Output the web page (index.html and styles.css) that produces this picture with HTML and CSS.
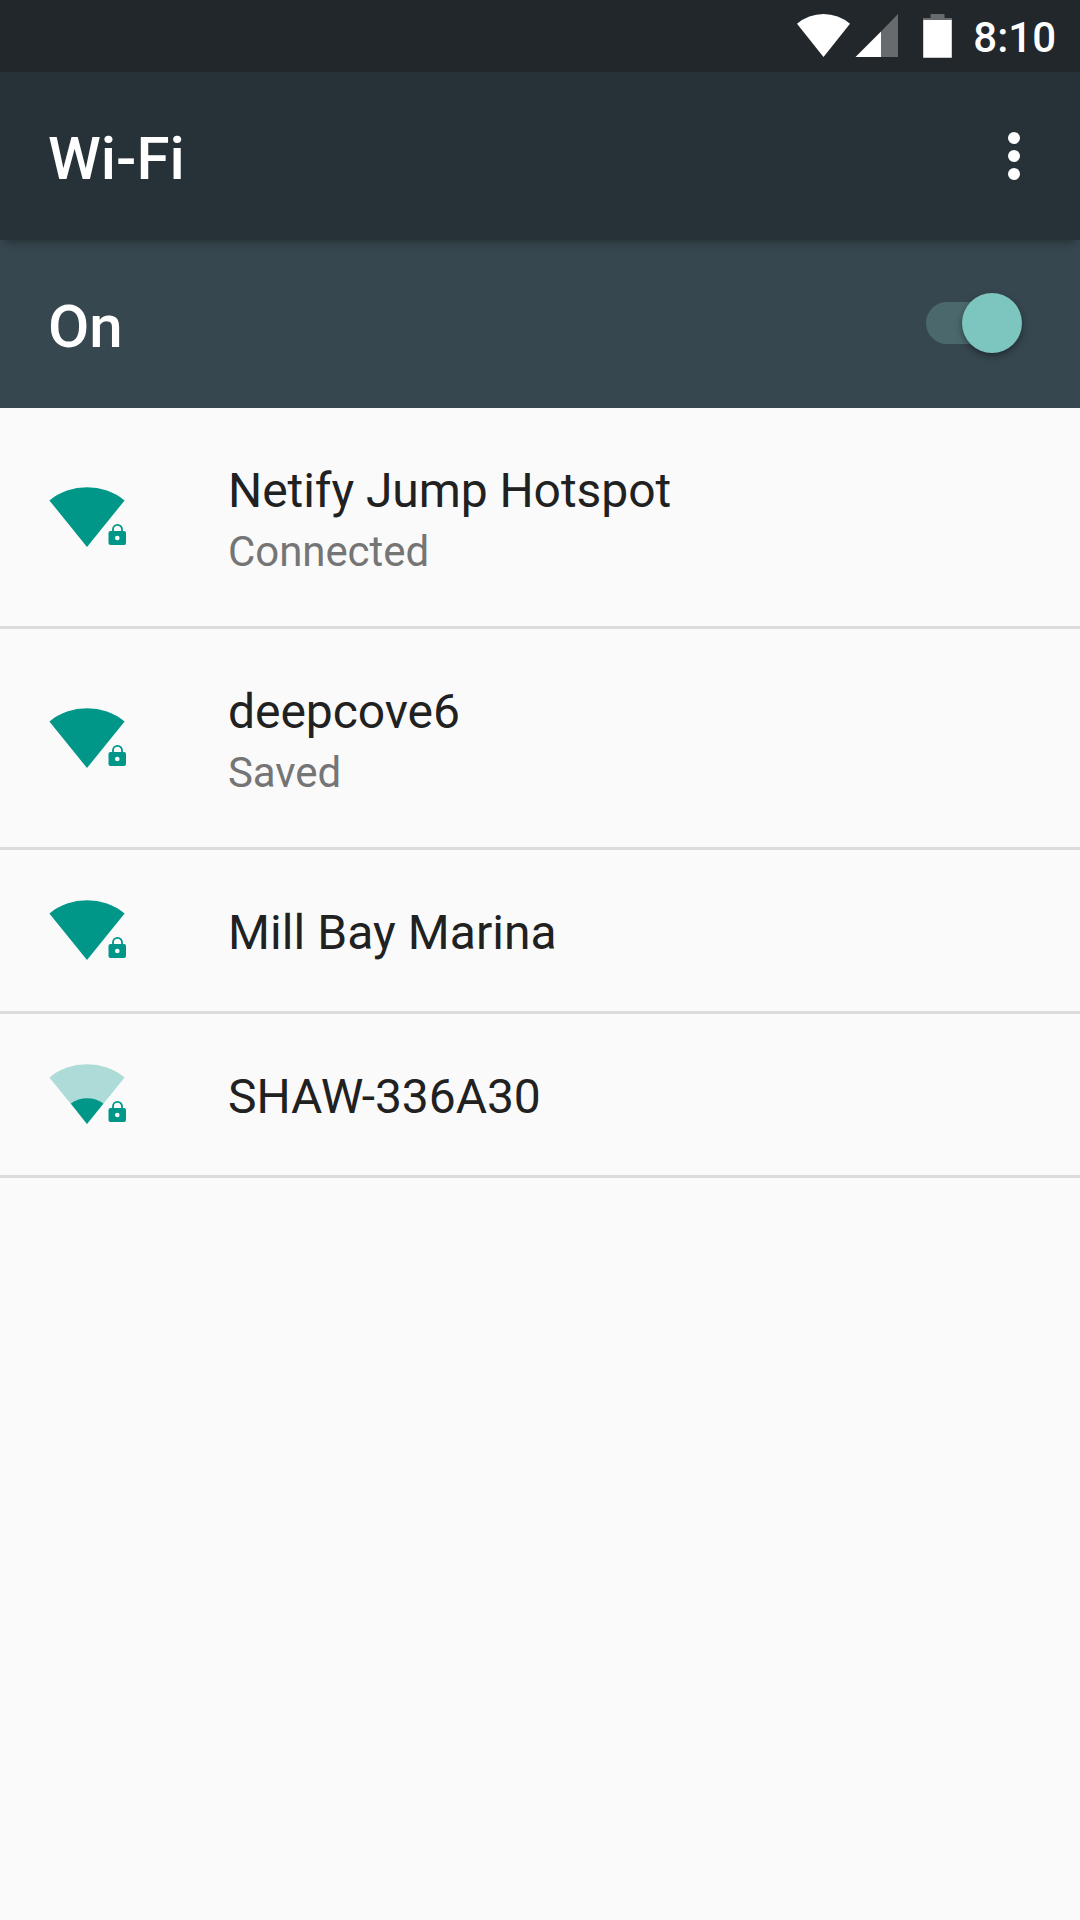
FILE: index.html
```html
<!DOCTYPE html>
<html lang="en">
<head>
<meta charset="utf-8">
<title>Wi-Fi</title>
<link rel="stylesheet" href="styles.css">
</head>
<body>
<svg class="defs" aria-hidden="true">
  <symbol id="fan" viewBox="0 0 78 60"><path d="M.4 13.4A60 60 0 0 1 75.6 13.4L38 60Z"/></symbol>
  <symbol id="lock" viewBox="0 0 78 60">
    <path fill-rule="evenodd" d="M61.500 44h13.500a2 2 0 0 1 2 2v10a2 2 0 0 1-2 2h-13.500a2 2 0 0 1-2-2v-10a2 2 0 0 1 2-2ZM68.300 48.700a2.300 2.300 0 1 0 0 4.600a2.300 2.300 0 1 0 0-4.600Z"/>
    <path d="M64 45v-2.700a4.500 4.500 0 0 1 9 0v2.700" fill="none" stroke="currentColor" stroke-width="1.800"/>
  </symbol>
</svg>
<header class="status">
  <svg class="status-icons" width="156" height="72" viewBox="797 0 156 72">
    <path d="M797 23.800A41 41 0 0 1 850 23.800L823.500 57Z" fill="#fff"/>
    <path d="M881 31.500L898 14V57H881Z" fill="#676b6d"/>
    <path d="M855.500 57L881 31.500V57Z" fill="#fff"/>
    <path d="M930.500 14h14v4h7.500v2h-29v-2h7.500Z" fill="#676b6d"/>
    <path d="M923.200 20h28.600v37.700h-28.600Z" fill="#fff"/>
  </svg>
  <time class="clock">8:10</time>
</header>
<div class="app-bar">
  <h1 class="heading">Wi-Fi</h1>
  <svg class="more" width="12" height="48" viewBox="0 0 12 48" fill="#fff"><circle cx="6" cy="6" r="6"/><circle cx="6" cy="24" r="6"/><circle cx="6" cy="42" r="6"/></svg>
</div>
<div class="switch-bar">
  <span class="heading">On</span>
  <div class="toggle"><span class="thumb"></span></div>
</div>
<main class="networks">
  <div class="row tall">
    <svg class="signal" width="78" height="60"><use href="#fan"/><use href="#lock"/></svg>
    <div><div class="name">Netify Jump Hotspot</div><div class="state">Connected</div></div>
  </div>
  <div class="row tall">
    <svg class="signal" width="78" height="60"><use href="#fan"/><use href="#lock"/></svg>
    <div><div class="name">deepcove6</div><div class="state">Saved</div></div>
  </div>
  <div class="row">
    <svg class="signal" width="78" height="60"><use href="#fan"/><use href="#lock"/></svg>
    <div class="name loose">Mill Bay Marina</div>
  </div>
  <div class="row">
    <svg class="signal" width="78" height="60"><use href="#fan" opacity=".3"/><path d="M21.800 39.400A28 28 0 0 1 54.400 39.400L38 60Z"/><use href="#lock"/></svg>
    <div class="name">SHAW-336A30</div>
  </div>
</main>
</body>
</html>
```
FILE: styles.css
```css
* { box-sizing: border-box; }

body {
  margin: 0;
  min-height: 1920px;
  background: #fafafa;
  color: #212121;
  font-family: Roboto, "Noto Sans", sans-serif;
}

svg { display: block; }

.defs { display: none; }

.status {
  display: flex;
  justify-content: flex-end;
  gap: 20px;
  height: 72px;
  padding-right: 24px;
  background: #21272b;
}

.clock {
  padding-top: 2px;
  color: #fff;
  font-size: 42px;
  font-weight: 500;
  line-height: 71px;
}

.app-bar,
.switch-bar {
  display: flex;
  justify-content: space-between;
  height: 168px;
  padding-left: 48px;
  color: #fff;
}

.app-bar {
  position: relative;
  padding-top: 52px;
  padding-right: 60px;
  background: #263238;
  box-shadow: 0 7px 8px -5px rgba(0, 0, 0, 0.35);
}

.heading {
  margin: 0;
  font-size: 60px;
  font-weight: 500;
  line-height: 70px;
}

.more { margin-top: 8px; }

.switch-bar {
  padding-top: 52px;
  padding-right: 58.5px;
  background: #37474f;
}

.toggle {
  display: flex;
  align-items: center;
  justify-content: flex-end;
  width: 95.5px;
  height: 42px;
  margin-top: 10px;
  border-radius: 21px;
  background: linear-gradient(to right, #4b696c 70px, transparent 70px);
}

.thumb {
  width: 60px;
  height: 60px;
  flex: none;
  border-radius: 50%;
  background: #7dc5bf;
  box-shadow: 0 3px 7px rgba(0, 0, 0, 0.4);
}

.row {
  display: grid;
  grid-template-columns: 179px 1fr;
  align-items: start;
  height: 164px;
  padding: 52px 0 0 49px;
  border-bottom: 3px solid #dcdcdc;
}

.tall { height: 221px; }

.signal {
  margin-top: -2px;
  color: #009688;
  fill: #009688;
}

.tall .signal { margin-top: 27px; }

.name {
  font-size: 48px;
  letter-spacing: -0.07px;
  line-height: 62px;
}

.loose { letter-spacing: 0.07px; }

.state {
  color: #757575;
  font-size: 42px;
  letter-spacing: -0.07px;
  line-height: 60px;
}
```
